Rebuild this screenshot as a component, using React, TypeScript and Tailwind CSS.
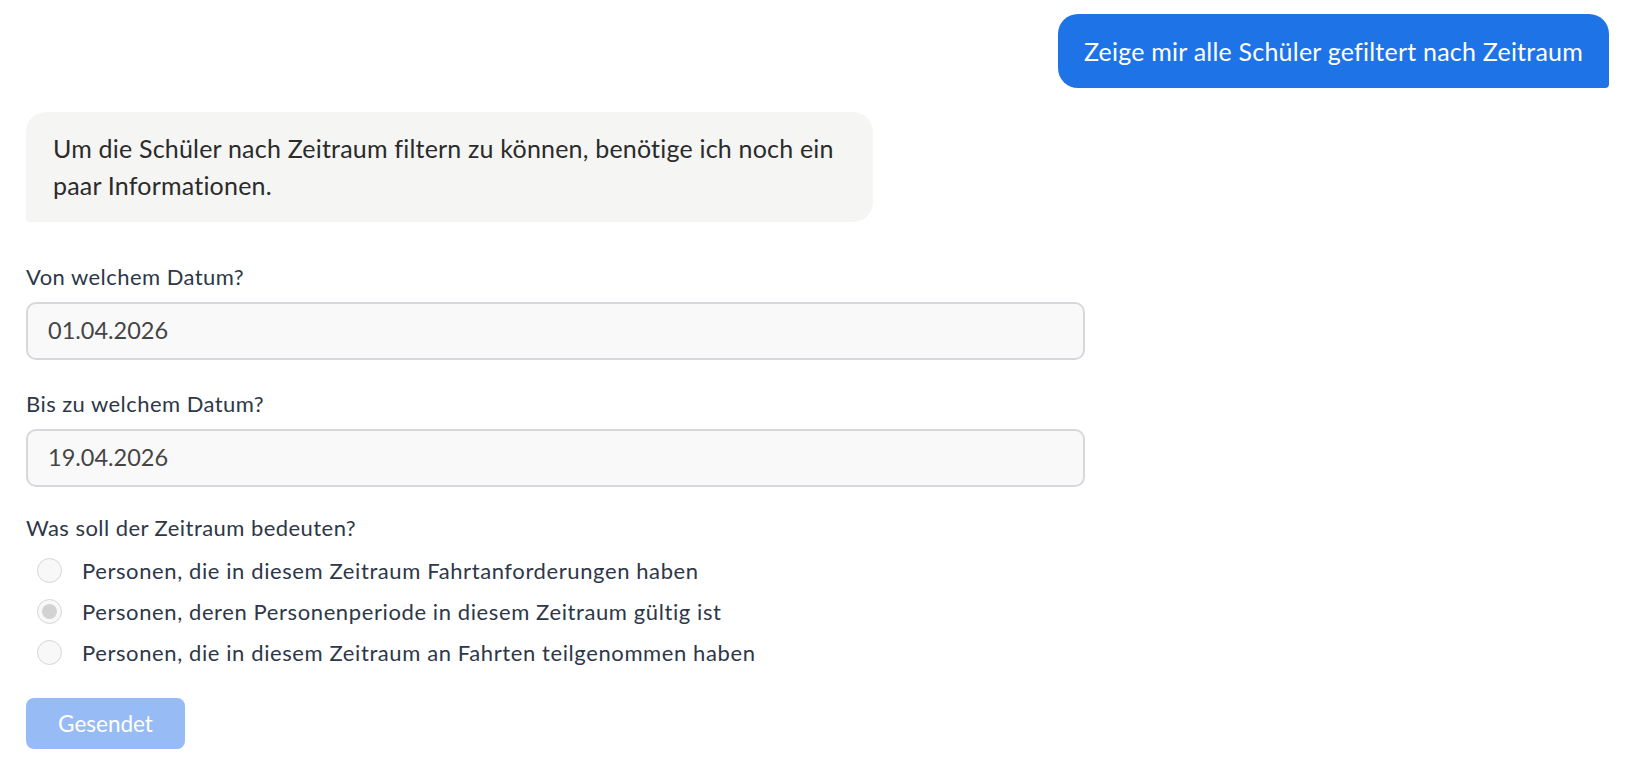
import React from "react";

const options = [
  "Personen, die in diesem Zeitraum Fahrtanforderungen haben",
  "Personen, deren Personenperiode in diesem Zeitraum gültig ist",
  "Personen, die in diesem Zeitraum an Fahrten teilgenommen haben",
];

function DateField({ label, value }: { label: string; value: string }) {
  return (
    <div className="flex flex-col">
      <div className="text-[22px] leading-[31px] tracking-[0.45px] text-[#2d3748]">{label}</div>
      <div className="mt-[10px] flex h-[58px] items-center rounded-[10px] border-2 border-[#d6d8dd] bg-[#f9f9f9] pl-[20px] text-[23.5px] text-[#454545]">
        {value}
      </div>
    </div>
  );
}

function Radio({ checked }: { checked?: boolean }) {
  return (
    <span className="flex h-[25px] w-[25px] shrink-0 items-center justify-center rounded-full border-[1.5px] border-[#d6d6d6] bg-[#f8f8f8]">
      {checked && <span className="h-[15px] w-[15px] rounded-full bg-[#d2d2d2]" />}
    </span>
  );
}

export default function App() {
  return (
    <div
      className="min-h-[766px] w-full bg-white pl-[26px] pr-[25px]"
      style={{ fontFamily: "Lato, 'Noto Sans', sans-serif" }}
    >
      <div className="flex flex-col">
        <div className="mt-[14px] self-end rounded-[20px] rounded-br-[4px] bg-[#1e73e7] px-[26px] py-[19px] text-[25px] leading-[36px] tracking-[0.22px] text-white">
          Zeige mir alle Schüler gefiltert nach Zeitraum
        </div>

        <div className="mt-[24px] w-[847px] whitespace-nowrap rounded-[20px] rounded-bl-[4px] bg-[#f5f5f3] px-[27px] py-[18px] text-[25px] leading-[37px] tracking-[0.2px] text-[#2b2b2b]">
          Um die Schüler nach Zeitraum filtern zu können, benötige ich noch ein
          <br />
          paar Informationen.
        </div>

        <div className="mt-[39px] flex w-[1059px] flex-col">
          <DateField label="Von welchem Datum?" value="01.04.2026" />
          <div className="mt-[28px]">
            <DateField label="Bis zu welchem Datum?" value="19.04.2026" />
          </div>

          <div className="mt-[25px] text-[22px] leading-[31px] tracking-[0.45px] text-[#2d3748]">
            Was soll der Zeitraum bedeuten?
          </div>
          <div className="mt-[7px] flex flex-col">
            {options.map((o, i) => (
              <label key={o} className="flex h-[41px] items-center pl-[11px]">
                <Radio checked={i === 1} />
                <span className="ml-[20px] text-[22px] tracking-[0.6px] text-[#2d3748]">{o}</span>
              </label>
            ))}
          </div>

          <div className="mt-[25px]">
            <button className="h-[51px] w-[159px] rounded-[8px] bg-[#97bbf5] text-[22.5px] text-white">
              Gesendet
            </button>
          </div>
        </div>
      </div>
    </div>
  );
}
